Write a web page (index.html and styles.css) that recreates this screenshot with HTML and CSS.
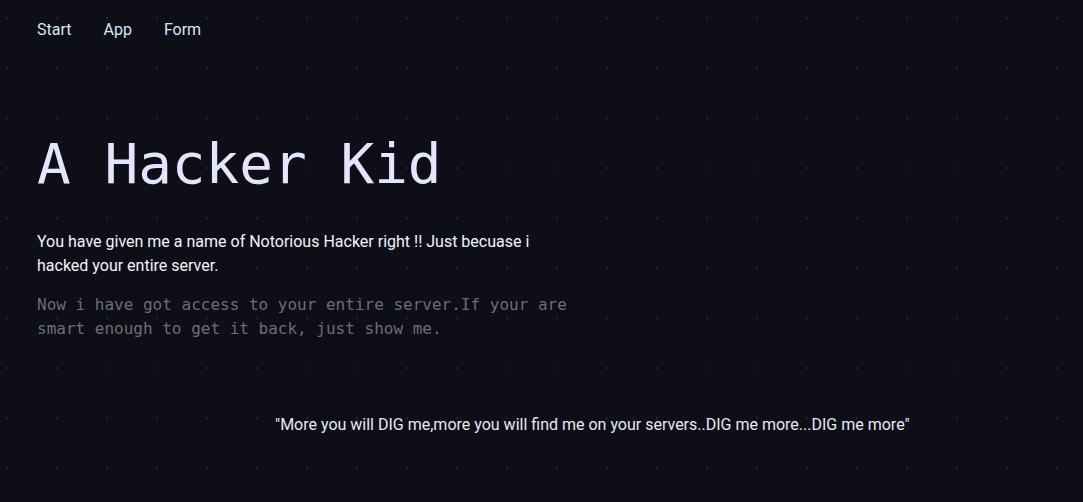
FILE: index.html
```html
<!DOCTYPE html>
<html lang="en">
<head>
<meta charset="utf-8">
<title>A Hacker Kid</title>
<link rel="stylesheet" href="styles.css">
</head>
<body>
<nav class="nav">
  <a class="nav-link" href="#">Start</a>
  <a class="nav-link" href="#">App</a>
  <a class="nav-link" href="#">Form</a>
</nav>
<main class="main">
  <h1 class="title">A Hacker Kid</h1>
  <p class="lead">You have given me a name of Notorious Hacker right !! Just becuase i hacked your entire server.</p>
  <p class="mono">Now i have got access to your entire server.If your are smart enough to get it back, just show me.</p>
  <p class="quote">"More you will DIG me,more you will find me on your servers..DIG me more...DIG me more"</p>
</main>
</body>
</html>
```
FILE: styles.css
```css
html, body {
  margin: 0;
  padding: 0;
}
body {
  background-color: #0d0e17;
  background-image: radial-gradient(circle at 1px 1px, #23242f 1px, transparent 1.6px);
  background-size: 50px 50px;
  background-position: 6px 17px;
  min-height: 502px;
  font-family: Roboto, "Liberation Sans", sans-serif;
  color: #f2f2f7;
}
.nav {
  display: flex;
  gap: 32px;
  padding: 18px 37px 0;
}
.nav-link {
  color: #d6e6f5;
  text-decoration: none;
  font-size: 16px;
  line-height: 24px;
}
.main {
  padding: 88px 37px 0;
}
.title {
  margin: 0;
  font-family: "DejaVu Sans Mono", monospace;
  font-weight: 400;
  font-size: 56px;
  line-height: 1.2;
  color: #e4e4fb;
}
.lead {
  margin: 33px 0 0;
  max-width: 512px;
  font-size: 16px;
  line-height: 24px;
  color: #f4f4f8;
}
.mono {
  margin: 15px 0 0;
  max-width: 576px;
  font-family: "DejaVu Sans Mono", monospace;
  font-size: 16px;
  line-height: 24px;
  color: #6d6d72;
}
.quote {
  margin: 72px 0 0 238px;
  font-size: 16px;
  line-height: 24px;
  color: #e8e8f2;
}
```
